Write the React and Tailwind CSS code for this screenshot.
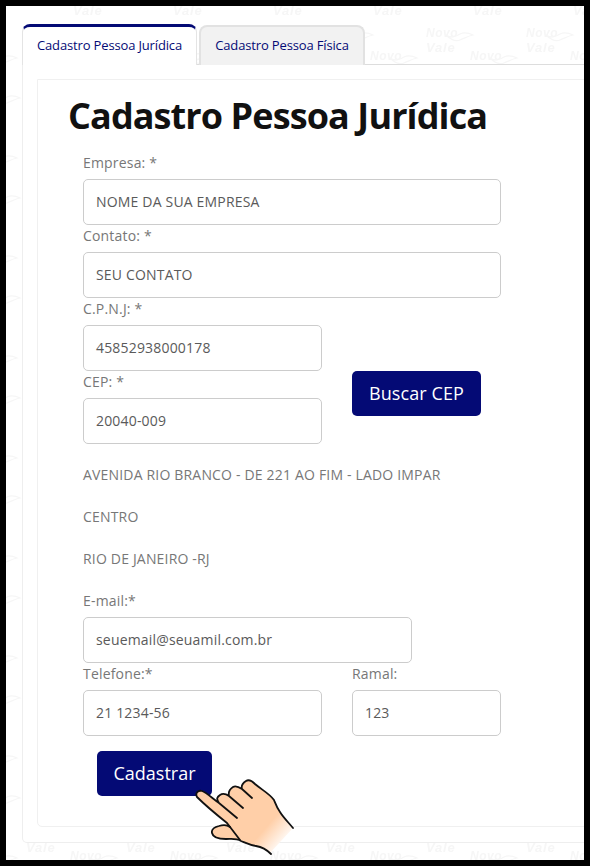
const NAVY = 'bg-[#040a75]'

// faint repeating logo behind the page
function Logo({ x, y }) {
  return (
    <g fill="#f6f6f6" fontFamily="'Liberation Sans', sans-serif" fontWeight="700" fontStyle="italic" fontSize="12">
      <text x={x} y={y} letterSpacing="0.5">Novo</text>
      <text x={x} y={y + 15} fontSize="13" letterSpacing="0.8">Vale</text>
      <path d={`M${x + 20} ${y - 2}c6 4 10 1 14-1s9-1 13 1c-5 1-8 3-13 5s-9 0-14-5z`} fill="none" stroke="#f6f6f6" strokeWidth="1.2" />
    </g>
  )
}

function Watermark() {
  const spots = [[26, 37], [70, 60], [73, 0], [-30, 60], [-27, 0], [73, 100], [-27, 100]]
  return (
    <svg className="absolute inset-0 w-full h-full" aria-hidden="true">
      <defs>
        <pattern id="wm" width="100" height="100" patternUnits="userSpaceOnUse" patternTransform="translate(-6 -6)">
          {spots.map(([x, y]) => <Logo key={`${x}-${y}`} x={x} y={y} />)}
        </pattern>
      </defs>
      <rect width="100%" height="100%" fill="url(#wm)" />
    </svg>
  )
}

function Hand() {
  return (
    <svg className="absolute left-[184px] top-[769px] w-[110px] h-[90px]" viewBox="190 775 110 90" aria-hidden="true">
      <defs>
        <linearGradient id="skin" gradientUnits="userSpaceOnUse" x1="256" y1="822" x2="284" y2="846">
          <stop offset="0.3" stopColor="#ffcfa8" />
          <stop offset="1" stopColor="#ffffff" />
        </linearGradient>
      </defs>
      <path
        d="M197 797C195 793 198 790 202 791C206 792 212 798 219 803C216 799 217 797 220 795C223 793 226 794 229 796C228 792 230 789 233 787C236 785 239 787 242 789C241 786 243 783 246 781C249 779 252 781 255 784C262 790 270 794 274 800C276 805 277 808 280 812C283 817 288 822 293 828L270 853C266 849 262 847 256 846C250 845 246 843 241 841C236 838 232 839 226 839C219 839 213 838 212 833C211 829 215 827 219 826C222 825 225 826 227 823C217 815 205 805 197 797Z"
        fill="url(#skin)"
      />
      <g fill="none" stroke="#111" strokeWidth="1.8" strokeLinecap="round" strokeLinejoin="round">
        <path d="M293 828C288 822 283 817 280 812C277 808 276 805 274 800C270 794 262 790 255 784C252 781 249 779 246 781C243 783 241 786 242 789L252 798M242 789C239 787 236 785 233 787C230 789 228 792 229 796L243 808M229 796C226 794 223 793 220 795C217 797 216 799 219 803L237 818M219 803C212 798 206 792 202 791C198 790 195 793 197 797C205 805 217 815 227 823L240 840" />
        <path d="M230 827C226 824 222 825 219 826C215 827 211 829 212 833C213 838 219 839 226 839C232 839 236 838 241 841C246 843 250 845 256 846C262 847 266 849 271 854" />
      </g>
    </svg>
  )
}

function Field({ label, value, className = 'w-full' }) {
  return (
    <div className={className}>
      <label className="block h-[27px] leading-[21px] text-[14px] tracking-[0.18px] text-[#777]">{label}</label>
      <div className="h-[46px] rounded-[5px] border border-[#ccc] bg-white px-3 pb-[2px] flex items-center text-[14px] tracking-[0.18px] text-[#5a5a5a]">
        {value}
      </div>
    </div>
  )
}

function Tab({ active, children, className }) {
  return active ? (
    <div className={`relative z-10 h-[41px] rounded-t-[8px] border-x border-[#e4e4e4] border-t-[3px] border-t-[#040a75] bg-white flex items-center justify-center text-[13px] tracking-[-0.15px] text-[#040a75] ${className}`}>
      {children}
    </div>
  ) : (
    <div className={`h-[40px] rounded-t-[8px] border-2 border-b-0 border-[#e2e2e2] bg-[#f2f2f2] flex items-center justify-center text-[13px] tracking-[-0.15px] text-[#040a75] ${className}`}>
      {children}
    </div>
  )
}

export default function App() {
  return (
    <div className="relative h-[866px] w-[590px] overflow-hidden border-[6px] border-black bg-white font-['Open_Sans',sans-serif]">
      <Watermark />

      <div className="relative pl-4 pt-[18px]">
        <div className="flex items-end gap-[2px]">
          <Tab active className="w-[175px]">Cadastro Pessoa Jurídica</Tab>
          <Tab className="w-[166px]">Cadastro Pessoa Física</Tab>
        </div>

        {/* tab panel runs past the right edge */}
        <div className="w-[600px] h-[779px] -mt-px rounded-bl-[5px] border border-[#eee] border-t-[#ddd] bg-white pl-[14px] pt-[14px]">
          <div className="h-[748px] rounded-bl-[5px] border border-[#f0f0f0] pl-[30px] pt-[16px]">
            <h1 className="h-[40px] leading-[40px] text-[36px] font-bold text-[#111] tracking-[-0.9px]">Cadastro Pessoa Jurídica</h1>

            <form className="mt-[16px] ml-[15px] w-[418px]">
              <Field label="Empresa: *" value="NOME DA SUA EMPRESA" />
              <Field label="Contato: *" value="SEU CONTATO" />
              <div className="flex gap-[30px]">
                <div className="w-[239px]">
                  <Field label="C.P.N.J: *" value="45852938000178" />
                  <Field label="CEP: *" value="20040-009" />
                </div>
                <div className="pt-[73px]">
                  <button type="button" className={`h-[45px] w-[129px] rounded-[5px] ${NAVY} text-[18px] tracking-[0.1px] text-white`}>Buscar CEP</button>
                </div>
              </div>

              <div className="mt-[20px] text-[14px] leading-[21px] tracking-[0.18px] text-[#777]">
                <p className="mb-[21px]">AVENIDA RIO BRANCO - DE 221 AO FIM - LADO IMPAR</p>
                <p className="mb-[21px]">CENTRO</p>
                <p className="mb-[21px]">RIO DE JANEIRO -RJ</p>
              </div>

              <Field label="E-mail:*" value="seuemail@seuamil.com.br" className="w-[329px]" />
              <div className="flex gap-[30px]">
                <Field label="Telefone:*" value="21 1234-56" className="w-[239px]" />
                <Field label="Ramal:" value="123" className="w-[149px]" />
              </div>

              <button type="button" className={`mt-[15px] ml-[14px] block h-[45px] w-[115px] rounded-[5px] ${NAVY} text-[18px] text-white`}>Cadastrar</button>
            </form>
          </div>
        </div>
      </div>

      <Hand />
    </div>
  )
}
